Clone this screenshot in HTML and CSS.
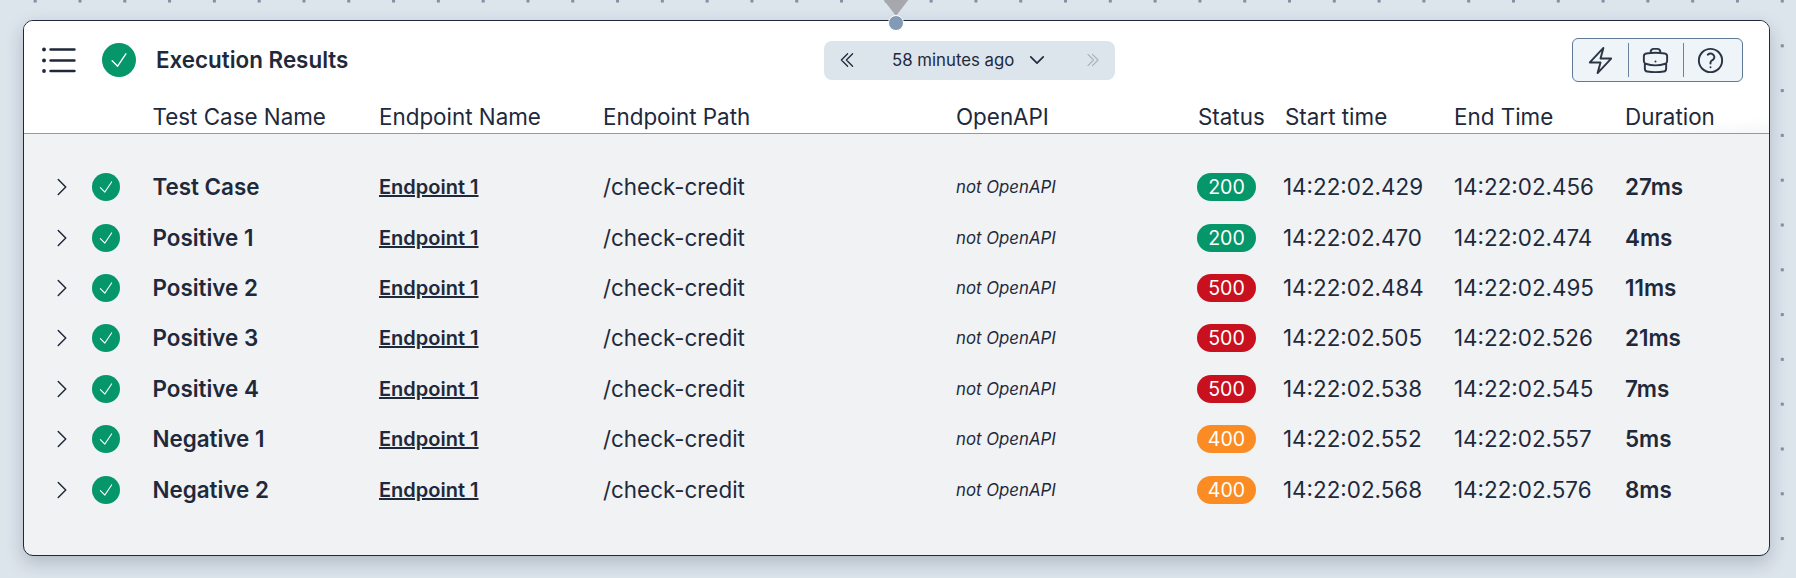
FILE: index.html
```html
<!DOCTYPE html>
<html lang="en">
<head>
<meta charset="utf-8">
<title>Execution Results</title>
<link rel="stylesheet" href="styles.css">
</head>
<body>
<svg class="defs" width="0" height="0" aria-hidden="true">
  <symbol id="check" viewBox="0 0 24 24"><path d="m4.5 12.75 6 6 9-13.5" fill="none" stroke="currentColor" stroke-width="1.5" stroke-linecap="round" stroke-linejoin="round"/></symbol>
  <symbol id="chev" viewBox="0 0 24 24"><path d="m8.25 4.5 7.5 7.5-7.5 7.5" fill="none" stroke="currentColor" stroke-width="1.5" stroke-linecap="round" stroke-linejoin="round"/></symbol>
</svg>
<div class="pin"><span class="pin-arrow"></span><span class="pin-dot"></span></div>
<main class="card">
  <header class="topbar">
    <div class="title-group">
      <svg class="menu" viewBox="0 0 34 24" aria-hidden="true">
        <circle cx="3" cy="1.5" r="1.9"/><circle cx="3" cy="12.5" r="1.9"/><circle cx="3" cy="23" r="1.9"/>
        <path d="M9.5 1.5h24M9.5 12.5h24M9.5 23h24" fill="none" stroke="currentColor" stroke-width="2.4" stroke-linecap="round"/>
      </svg>
      <span class="status-lg"><svg><use href="#check"/></svg></span>
      <h1 class="title">Execution Results</h1>
    </div>
    <div class="nav-pill">
      <svg class="nav-icon" viewBox="0 0 24 24"><path d="m18.75 4.5-7.5 7.5 7.5 7.5m-6-15L5.25 12l7.5 7.5" fill="none" stroke="currentColor" stroke-width="1.5" stroke-linecap="round" stroke-linejoin="round"/></svg>
      <span class="nav-text">58 minutes ago</span>
      <svg class="nav-down" viewBox="0 0 24 24"><path d="m19.5 8.25-7.5 7.5-7.5-7.5" fill="none" stroke="currentColor" stroke-width="2" stroke-linecap="round" stroke-linejoin="round"/></svg>
      <svg class="nav-next" viewBox="0 0 24 24"><path d="m5.25 4.5 7.5 7.5-7.5 7.5m6-15 7.5 7.5-7.5 7.5" fill="none" stroke="currentColor" stroke-width="1.5" stroke-linecap="round" stroke-linejoin="round"/></svg>
    </div>
    <div class="tools">
      <svg class="tool" viewBox="0 0 24 24"><path d="m3.75 13.5 10.5-11.25L12 10.5h8.25L9.75 21.75 12 13.5H3.75Z" fill="none" stroke="currentColor" stroke-width="1.5" stroke-linejoin="round"/></svg>
      <span class="sep"></span>
      <svg class="tool" viewBox="0 0 24 24"><path d="M20.25 14.15v4.25c0 1.094-.787 2.036-1.872 2.18-2.087.277-4.216.42-6.378.42s-4.291-.143-6.378-.42c-1.085-.144-1.872-1.086-1.872-2.18v-4.25m16.5 0a2.18 2.18 0 0 0 .75-1.661V8.706c0-1.081-.768-2.015-1.837-2.175a48.114 48.114 0 0 0-3.413-.387m4.5 8.006c-.194.165-.42.295-.673.38A23.978 23.978 0 0 1 12 15.75c-2.648 0-5.195-.429-7.577-1.22a2.016 2.016 0 0 1-.673-.38m0 0A2.18 2.18 0 0 1 3 12.489V8.706c0-1.081.768-2.015 1.837-2.175a48.111 48.111 0 0 1 3.413-.387m7.5 0V5.25A2.25 2.25 0 0 0 13.5 3h-3a2.25 2.25 0 0 0-2.25 2.25v.894m7.5 0a48.667 48.667 0 0 0-7.5 0M12 12.75h.008v.008H12v-.008Z" fill="none" stroke="currentColor" stroke-width="1.5" stroke-linecap="round" stroke-linejoin="round"/></svg>
      <span class="sep"></span>
      <svg class="tool" viewBox="0 0 24 24"><path d="M9.879 7.519c1.171-1.025 3.071-1.025 4.242 0 1.172 1.025 1.172 2.687 0 3.712-.203.179-.43.326-.67.442-.745.361-1.45.999-1.45 1.827v.75M21 12a9 9 0 1 1-18 0 9 9 0 0 1 18 0Zm-9 5.25h.008v.008H12v-.008Z" fill="none" stroke="currentColor" stroke-width="1.5" stroke-linecap="round" stroke-linejoin="round"/></svg>
    </div>
  </header>
  <div class="grid head">
    <span></span><span></span>
    <span>Test Case Name</span><span>Endpoint Name</span><span>Endpoint Path</span><span>OpenAPI</span><span>Status</span><span>Start time</span><span>End Time</span><span>Duration</span>
  </div>
  <section class="rows">
    <div class="grid row">
      <svg class="chev"><use href="#chev"/></svg><span class="status-sm"><svg><use href="#check"/></svg></span>
      <span class="name">Test Case</span><a class="endpoint">Endpoint 1</a><span>/check-credit</span><em class="api">not OpenAPI</em><span class="badge ok">200</span><span class="start">14:22:02.429</span><span>14:22:02.456</span><span class="dur">27ms</span>
    </div>
    <div class="grid row">
      <svg class="chev"><use href="#chev"/></svg><span class="status-sm"><svg><use href="#check"/></svg></span>
      <span class="name">Positive 1</span><a class="endpoint">Endpoint 1</a><span>/check-credit</span><em class="api">not OpenAPI</em><span class="badge ok">200</span><span class="start">14:22:02.470</span><span>14:22:02.474</span><span class="dur">4ms</span>
    </div>
    <div class="grid row">
      <svg class="chev"><use href="#chev"/></svg><span class="status-sm"><svg><use href="#check"/></svg></span>
      <span class="name">Positive 2</span><a class="endpoint">Endpoint 1</a><span>/check-credit</span><em class="api">not OpenAPI</em><span class="badge err">500</span><span class="start">14:22:02.484</span><span>14:22:02.495</span><span class="dur">11ms</span>
    </div>
    <div class="grid row">
      <svg class="chev"><use href="#chev"/></svg><span class="status-sm"><svg><use href="#check"/></svg></span>
      <span class="name">Positive 3</span><a class="endpoint">Endpoint 1</a><span>/check-credit</span><em class="api">not OpenAPI</em><span class="badge err">500</span><span class="start">14:22:02.505</span><span>14:22:02.526</span><span class="dur">21ms</span>
    </div>
    <div class="grid row">
      <svg class="chev"><use href="#chev"/></svg><span class="status-sm"><svg><use href="#check"/></svg></span>
      <span class="name">Positive 4</span><a class="endpoint">Endpoint 1</a><span>/check-credit</span><em class="api">not OpenAPI</em><span class="badge err">500</span><span class="start">14:22:02.538</span><span>14:22:02.545</span><span class="dur">7ms</span>
    </div>
    <div class="grid row">
      <svg class="chev"><use href="#chev"/></svg><span class="status-sm"><svg><use href="#check"/></svg></span>
      <span class="name">Negative 1</span><a class="endpoint">Endpoint 1</a><span>/check-credit</span><em class="api">not OpenAPI</em><span class="badge warn">400</span><span class="start">14:22:02.552</span><span>14:22:02.557</span><span class="dur">5ms</span>
    </div>
    <div class="grid row">
      <svg class="chev"><use href="#chev"/></svg><span class="status-sm"><svg><use href="#check"/></svg></span>
      <span class="name">Negative 2</span><a class="endpoint">Endpoint 1</a><span>/check-credit</span><em class="api">not OpenAPI</em><span class="badge warn">400</span><span class="start">14:22:02.568</span><span>14:22:02.576</span><span class="dur">8ms</span>
    </div>
  </section>
</main>
</body>
</html>
```
FILE: styles.css
```css
* { box-sizing: border-box; }
html, body { margin: 0; height: 100%; overflow: hidden; }
body {
  position: relative;
  font-family: Inter, "Liberation Sans", sans-serif;
  color: #1e293b;
  background-color: #dce4ec;
  background-image: radial-gradient(circle at center, #7f90a5 1.4px, transparent 1.9px);
  background-size: 44.8px 44.8px;
  background-position: 12.8px -21.4px;
  padding: 20px 26px 0 23px;
}
.defs { position: absolute; }
.pin { position: absolute; left: 884px; top: -1px; width: 24px; z-index: 2; display: flex; flex-direction: column; align-items: center; }
.pin-arrow { width: 0; height: 0; border-left: 13px solid transparent; border-right: 13px solid transparent; border-top: 17px solid #a6a8ad; }
.pin-dot { width: 16px; height: 16px; margin-top: -1px; border-radius: 50%; background: #839ab4; border: 1px solid #fff; }

.card {
  height: 536px;
  border: 1px solid #1e293b;
  border-radius: 10px;
  background: #f0f2f4;
  box-shadow: 0 7px 18px rgba(30, 41, 59, .22);
  overflow: hidden;
}
.topbar {
  display: flex;
  align-items: center;
  height: 61px;
  padding: 17px 26px 0 0;
  background: #fff;
}
.title-group { width: 800px; display: flex; align-items: center; }
.menu { width: 34px; height: 24px; margin-left: 17px; fill: currentColor; color: #1e293b; overflow: visible; }
.status-lg { width: 34px; height: 34px; margin-left: 27px; border-radius: 50%; background: #059669; color: #fff; display: flex; align-items: center; justify-content: center; }
.status-lg svg { width: 22px; height: 22px; }
.title { margin: 0 0 0 20px; font-size: 22.4px; line-height: 24px; font-weight: 600; }

.nav-pill {
  width: 291px;
  height: 39px;
  display: flex;
  align-items: center;
  background: #dce4ec;
  border-radius: 8px;
  padding-left: 13px;
}
.nav-icon { width: 20px; height: 20px; }
.nav-text { margin-left: 35px; font-size: 16.8px; line-height: 20px; }
.nav-down { width: 20px; height: 20px; margin-left: 13px; }
.nav-next { width: 18px; height: 18px; margin-left: 37px; color: #a8b1bd; }

.tools {
  margin-left: auto;
  width: 171px;
  height: 44px;
  display: flex;
  align-items: center;
  justify-content: space-between;
  padding: 0 16px 0 12px;
  background: #eff4f9;
  border: 1.5px solid #5f7896;
  border-radius: 6px;
  color: #2b3543;
}
.tool { width: 31px; height: 31px; }
.sep { width: 1px; height: 34px; background: #6a83a1; }

.grid {
  display: grid;
  grid-template-columns: 68px 60.5px 226.5px 224px 353px 242px 87px 169px 171px 1fr;
  align-items: center;
}
.head {
  height: 52px;
  align-items: end;
  padding-bottom: 4px;
  border-bottom: 1px solid #8a9cb3;
  background: linear-gradient(175deg, #fff 92%, #f4f6f8);
  font-size: 22.4px;
  line-height: 24px;
}
.rows { padding-top: 28px; }
.row { height: 50.4px; font-size: 22.4px; line-height: 24px; }
.chev { width: 24px; height: 24px; margin-left: 26px; color: #1e293b; }
.status-sm { width: 28px; height: 28px; border-radius: 50%; background: #059669; color: #fff; display: flex; align-items: center; justify-content: center; }
.status-sm svg { width: 18px; height: 18px; }
.name, .dur { font-weight: 600; }
.endpoint { font-size: 20px; font-weight: 600; text-decoration: underline; }
.api { font-size: 16.8px; font-style: italic; }
.badge { width: 59px; height: 28px; margin-left: -1px; border-radius: 14px; display: flex; align-items: center; justify-content: center; color: #fff; font-size: 19.6px; }
.ok { background: #059669; }
.err { background: #c9101f; }
.warn { background: #fb8c23; }
.start { margin-left: -2px; }
```
